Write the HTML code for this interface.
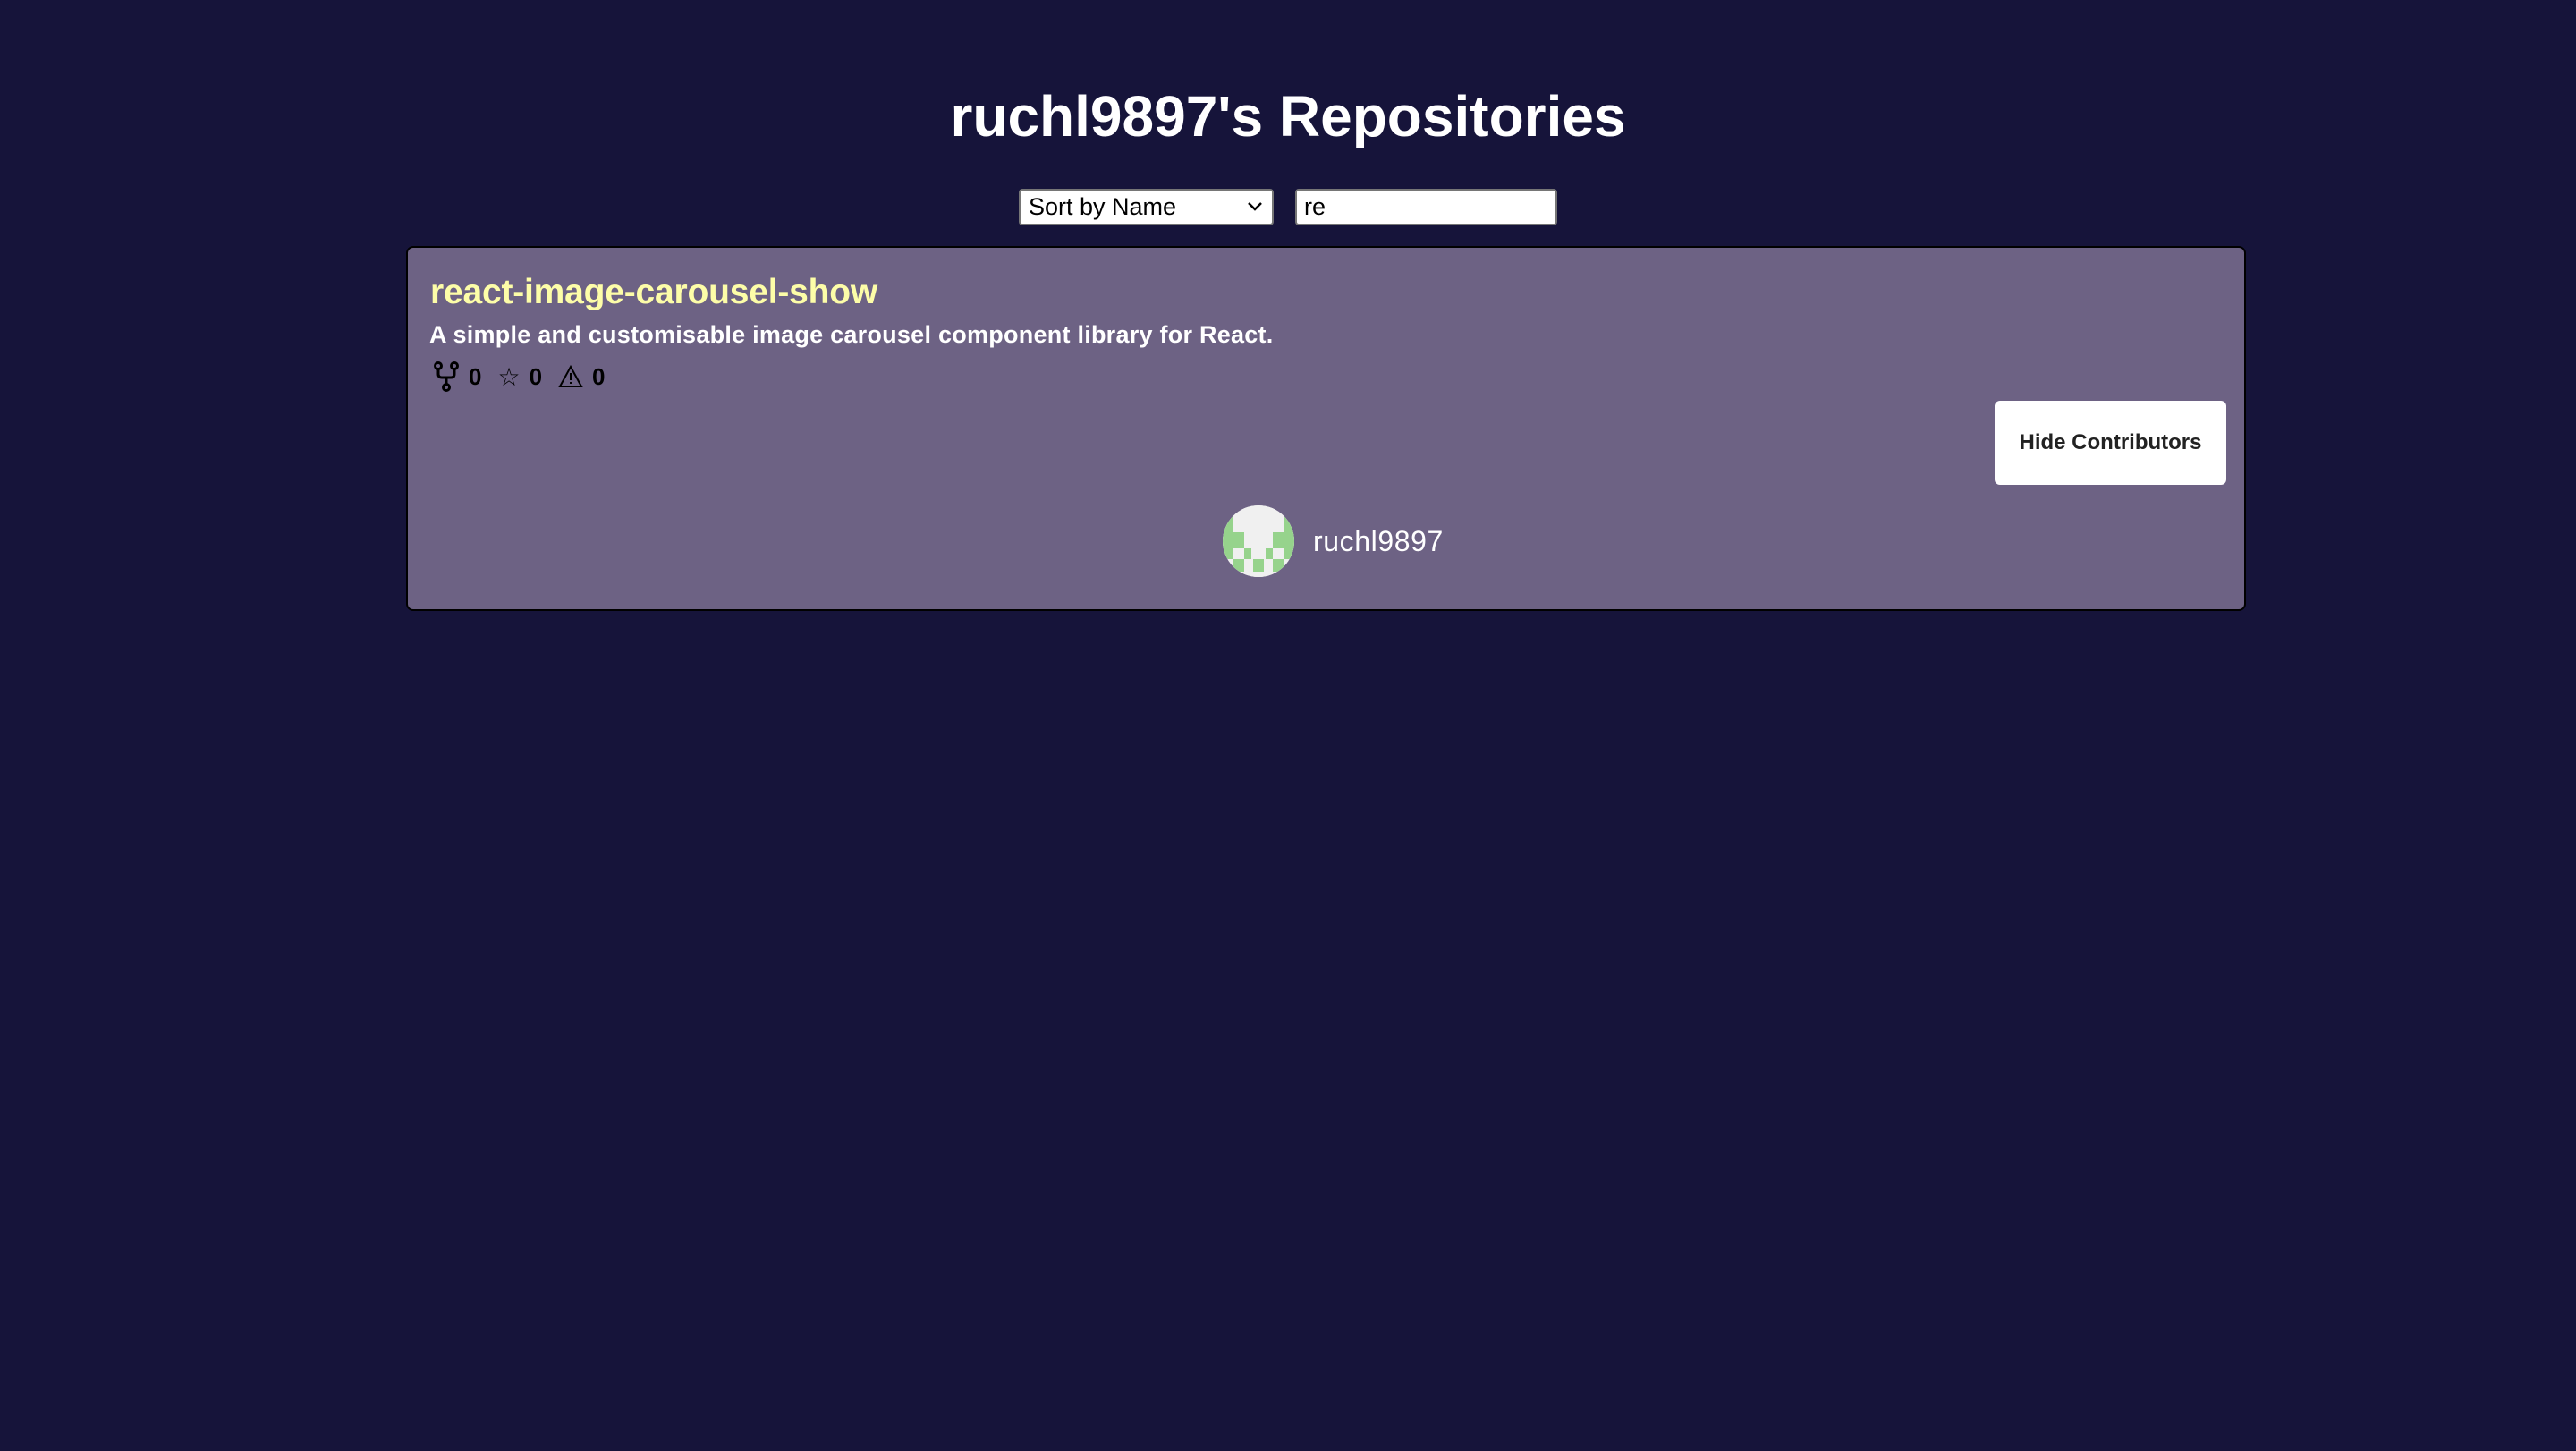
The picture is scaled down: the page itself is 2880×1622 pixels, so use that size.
<!DOCTYPE html>
<html><head><style>
body{margin:0;width:2880px;height:1622px;background:#16143a;font-family:"Liberation Sans",sans-serif;overflow:hidden;position:relative}
h1{position:absolute;top:90px;left:0;width:2880px;text-align:center;margin:0;font-size:64px;color:#fff;font-weight:bold;line-height:80px}
.sel{position:absolute;left:1139px;top:211px;width:285px;height:41px;background:#fff;border:2px solid #767676;border-radius:4px;box-sizing:border-box;font-size:27px;padding-left:9px;line-height:37px;color:#000}
.inp{position:absolute;left:1448px;top:211px;width:293px;height:41px;background:#fff;border:2px solid #767676;border-radius:4px;box-sizing:border-box;font-size:27px;padding-left:8px;line-height:37px;color:#000}
.card{position:absolute;left:454px;top:275px;width:2057px;height:408px;background:#6d6284;border:2px solid #000;border-radius:8px;box-sizing:border-box}
.t{position:absolute;left:25px;top:28px;font-size:39px;font-weight:bold;color:#fdfda8;letter-spacing:-0.2px}
.d{position:absolute;left:24px;top:82px;font-size:27px;font-weight:bold;color:#fff;letter-spacing:0.25px}
.s{position:absolute;left:28px;top:127px;font-size:26px;font-weight:bold;color:#000;display:flex;align-items:center;gap:10px}
.btn{position:absolute;left:1774px;top:171px;width:259px;height:94px;background:#fff;border-radius:6px;font-size:24px;font-weight:bold;color:#222;text-align:center;line-height:94px}
.av{position:absolute;left:911px;top:288px;width:80px;height:80px;border-radius:50%;overflow:hidden;background:#f0f0f0}
.nm{position:absolute;left:1012px;top:310px;font-size:32px;color:#fff;letter-spacing:0.6px}
</style></head><body>
<h1>ruchl9897's Repositories</h1>
<div class="sel">Sort by Name<svg style="position:absolute;right:10px;top:12px" width="18" height="12" viewBox="0 0 18 12"><path d="M2 2l7 7 7-7" fill="none" stroke="#000" stroke-width="2.5"/></svg></div>
<div class="inp">re</div>
<div class="card">
<div class="t">react-image-carousel-show</div>
<div class="d">A simple and customisable image carousel component library for React.</div>
<div class="s">
<svg width="30" height="34" viewBox="0 0 30 34"><circle cx="6" cy="5" r="3.5" fill="none" stroke="#000" stroke-width="3"/><circle cx="24" cy="5" r="3.5" fill="none" stroke="#000" stroke-width="3"/><circle cx="15" cy="29" r="3.5" fill="none" stroke="#000" stroke-width="3"/><path d="M6 9v5q0 4 4 4h10q4 0 4-4V9M15 18v7" fill="none" stroke="#000" stroke-width="3"/></svg><span>0</span>
<span style="font-weight:normal;font-size:28px;margin-left:8px">☆</span><span>0</span>
<svg style="margin-left:8px" width="28" height="26" viewBox="0 0 28 26"><path d="M14 2L26 24H2Z" fill="none" stroke="#000" stroke-width="2"/><path d="M14 9v8M14 19v2" stroke="#000" stroke-width="2"/></svg><span>0</span>
</div>
<div class="btn">Hide Contributors</div>
<div class="av"><svg width="80" height="80" viewBox="0 0 80 80"><rect width="80" height="80" fill="#f0f0f0"/><g fill="#96d38c"><rect x="0" y="12" width="12" height="48"/><rect x="68" y="12" width="12" height="48"/><rect x="12" y="30" width="12" height="18"/><rect x="56" y="30" width="12" height="18"/><rect x="24" y="48" width="8" height="12"/><rect x="48" y="48" width="8" height="12"/><rect x="12" y="60" width="12" height="14"/><rect x="34" y="60" width="12" height="14"/><rect x="56" y="60" width="12" height="14"/></g></svg></div>
<div class="nm">ruchl9897</div>
</div>
</body></html>
